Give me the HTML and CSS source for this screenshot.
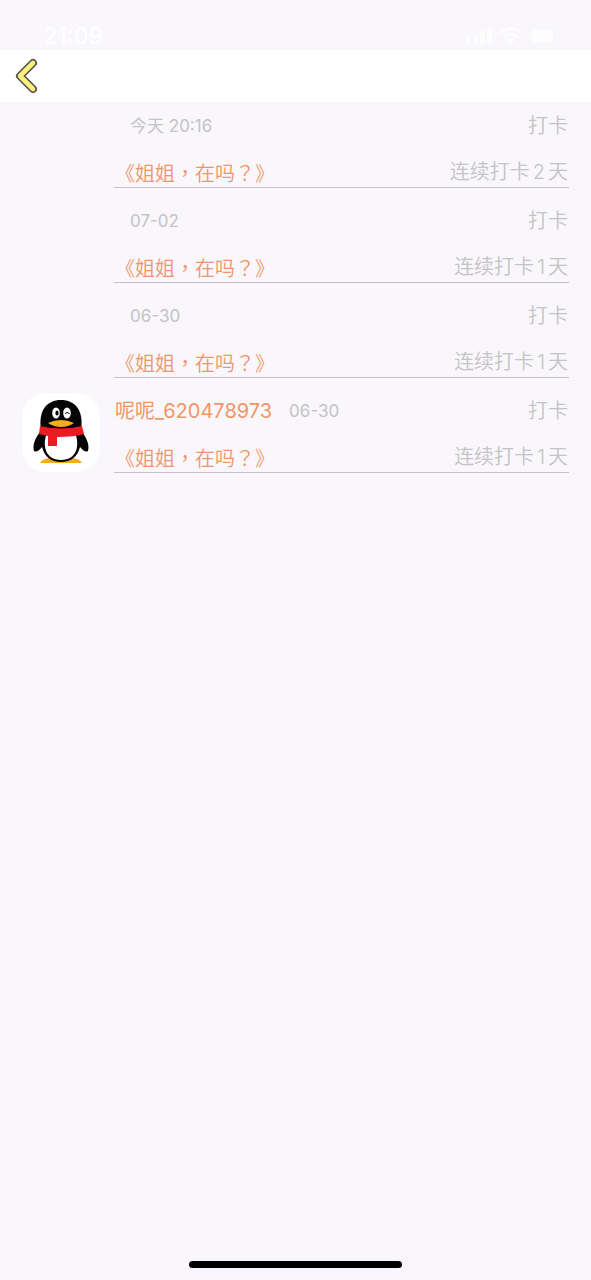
FILE: index.html
```
<!DOCTYPE html>
<html lang="zh-CN">
<head>
<meta charset="utf-8">
<meta name="viewport" content="width=device-width, initial-scale=1">
<title>打卡</title>
<link rel="stylesheet" href="styles.css">
</head>
<body>
<div class="status">
  <span class="clock">21:09</span>
  <svg class="status-icons" width="102" height="18" viewBox="0 0 102 18" aria-hidden="true">
    <g fill="#fff">
      <rect x="0" y="10" width="5" height="7" rx="1"/>
      <rect x="7" y="8" width="5" height="9" rx="1"/>
      <rect x="14" y="4" width="5" height="13" rx="1"/>
      <rect x="21" y="1" width="5" height="16" rx="1"/>
      <path d="M45 17 41 13Q45 10 49 13Z"/>
      <rect x="66" y="3" width="21" height="12" rx="2"/>
      <path d="M98 6Q101 9 98 12Z" opacity=".5"/>
    </g>
    <g fill="none" stroke="#fff" stroke-width="3">
      <path d="M34 6Q45-3 56 6M38 10Q45 4 52 10"/>
      <rect x="64" y="1" width="32" height="16" rx="5" stroke-width="1" opacity=".5"/>
    </g>
  </svg>
</div>
<header class="navbar">
  <button class="back" type="button" aria-label="返回">
    <svg width="24" height="36" viewBox="0 0 24 36" aria-hidden="true">
      <g fill="none" stroke-linecap="round" stroke-linejoin="round">
        <path d="M19 5 6 18 19 31" stroke="#55554a" stroke-width="8"/>
        <path d="M19 5 6 18 19 31" stroke="#fbf080" stroke-width="4.6"/>
      </g>
    </svg>
  </button>
</header>
<main class="list">
  <article class="row">
    <div class="entry">
      <div class="line"><time class="date">今天 20:16</time><span class="kind">打卡</span></div>
      <div class="line"><a class="title" href="#" lang="zh-TW">《姐姐，在吗？》</a><span class="streak">连续打卡<span class="count">2</span>天</span></div>
    </div>
  </article>
  <article class="row">
    <div class="entry">
      <div class="line"><time class="date">07-02</time><span class="kind">打卡</span></div>
      <div class="line"><a class="title" href="#" lang="zh-TW">《姐姐，在吗？》</a><span class="streak">连续打卡<span class="count">1</span>天</span></div>
    </div>
  </article>
  <article class="row">
    <div class="entry">
      <div class="line"><time class="date">06-30</time><span class="kind">打卡</span></div>
      <div class="line"><a class="title" href="#" lang="zh-TW">《姐姐，在吗？》</a><span class="streak">连续打卡<span class="count">1</span>天</span></div>
    </div>
  </article>
  <article class="row">
    <div class="avatar">
      <svg width="78" height="79" viewBox="0 0 78 79" role="img" aria-label="头像">
        <path d="M18 70Q20 66 27 65H51Q58 66 60 70Z" fill="#f5ad1c"/>
        <path d="M19 38C14 43 10 52 12 58Q15 60 20 54Q24 69 39 69Q54 69 58 54Q63 60 66 58C68 52 64 43 59 38Z" fill="#050505"/>
        <path d="M25 40C20 52 23 67 39 67S58 52 53 40Z" fill="#fff"/>
        <path d="M19 37C16 17 25 7 39 7S62 17 59 37Z" fill="#050505"/>
        <path d="M18 33Q39 38 60 33L62 41Q53 44 35 44V53H26V43L17 41Z" fill="#e91c23"/>
        <ellipse cx="34" cy="20" rx="3.8" ry="5.6" fill="#fff"/>
        <ellipse cx="45" cy="20" rx="3.8" ry="5.6" fill="#fff"/>
        <ellipse cx="35" cy="20" rx="1.6" ry="2.6" fill="#050505"/>
        <path d="M43 20.5Q45 18.5 47.5 20.5" fill="none" stroke="#050505" stroke-width="1"/>
        <path d="M26 30Q32 27 39 27Q46 27 52 30Q46 34 39 34Q32 34 26 30Z" fill="#f5ad1c"/>
      </svg>
    </div>
    <div class="entry">
      <div class="line"><a class="name" href="#">呢呢_620478973</a><time class="date">06-30</time><span class="kind">打卡</span></div>
      <div class="line"><a class="title" href="#" lang="zh-TW">《姐姐，在吗？》</a><span class="streak">连续打卡<span class="count">1</span>天</span></div>
    </div>
  </article>
</main>
<footer class="home"><div class="home-bar"></div></footer>
</body>
</html>
```
FILE: styles.css
```
* { box-sizing: border-box; }
body {
  margin: 0;
  min-height: 100vh;
  display: flex;
  flex-direction: column;
  background: #f9f7fb;
  color: #c4c3c5;
  font-family: Inter, "Noto Sans CJK SC", sans-serif;
  font-size: 20px;
  font-weight: 350;
}
a { color: inherit; text-decoration: none; }
.status {
  height: 50px;
  padding: 22px 23px 0 43px;
  display: flex;
  justify-content: space-between;
  color: #fff;
}
.clock { font-size: 23px; line-height: 28px; font-weight: 500; }
.status-icons { margin-top: 5px; opacity: .8; }
.navbar {
  height: 52px;
  padding-left: 14px;
  display: flex;
  align-items: center;
  background: #fff;
}
.back { display: flex; padding: 0; border: 0; background: none; }
.list {
  flex: 1;
  display: flex;
  flex-direction: column;
  gap: 9px;
  padding: 0 22px;
}
.row { display: flex; }
.avatar {
  width: 78px;
  height: 79px;
  margin-top: 6px;
  border-radius: 24px;
  background: #fff;
  overflow: hidden;
}
.entry {
  flex: 1;
  margin-left: 92px;
  padding-top: 9px;
  display: flex;
  flex-direction: column;
  gap: 16px;
  border-bottom: 1px solid #c4c3c6;
}
.avatar + .entry { margin-left: 14px; }
.line { display: flex; align-items: center; height: 30px; line-height: 30px; padding: 0 1px; }
.date { margin-left: 15px; font-size: 17px; font-weight: 400; }
.name + .date { margin-left: 17px; }
.kind, .streak { margin-left: auto; }
.count { margin: 0 3px; }
.name, .title { color: #ef9669; }
.name { font-weight: 400; }
.title { padding-top: 3px; font-family: Inter, "Noto Sans CJK TC", sans-serif; }
.home { display: flex; justify-content: center; padding-bottom: 12px; }
.home-bar { width: 36%; height: 7px; border-radius: 4px; background: #000; }
```
